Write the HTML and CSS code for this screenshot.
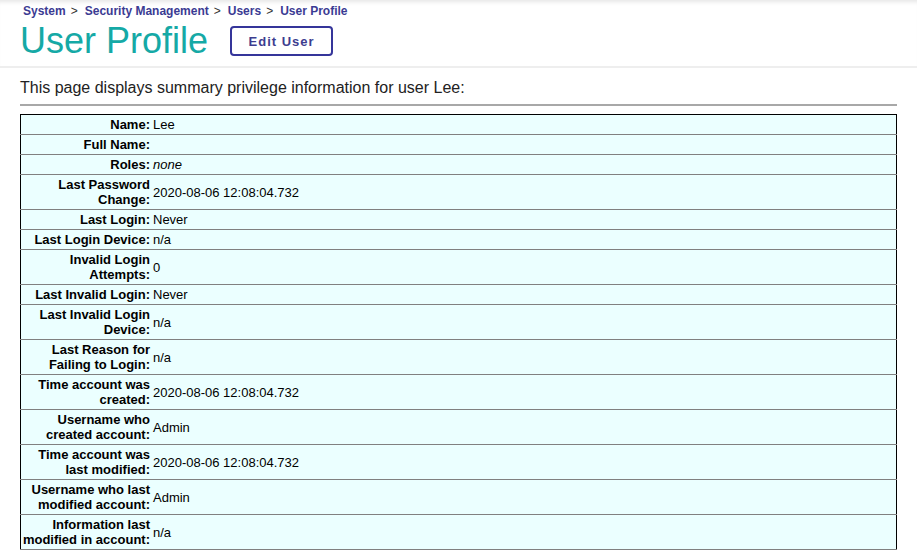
FILE: index.html
```html
<!DOCTYPE html>
<html lang="en">
<head>
<meta charset="utf-8">
<title>User Profile</title>
<link rel="stylesheet" href="styles.css">
</head>
<body>
<header class="page-header">
  <nav class="breadcrumb">
    <a href="#">System</a><span class="sep">&gt;</span><a href="#">Security Management</a><span class="sep">&gt;</span><a href="#">Users</a><span class="sep">&gt;</span><a href="#">User Profile</a>
  </nav>
  <div class="title-row">
    <h1 class="title">User Profile</h1>
    <button class="btn-edit" type="button">Edit User</button>
  </div>
</header>
<main class="content">
  <p class="intro">This page displays summary privilege information for user Lee:</p>
  <hr class="divider">
  <table class="profile">
    <tbody>
      <tr><td class="label">Name:</td><td class="value">Lee</td></tr>
      <tr><td class="label">Full Name:</td><td class="value"></td></tr>
      <tr><td class="label">Roles:</td><td class="value"><em>none</em></td></tr>
      <tr><td class="label">Last Password Change:</td><td class="value">2020-08-06 12:08:04.732</td></tr>
      <tr><td class="label">Last Login:</td><td class="value">Never</td></tr>
      <tr><td class="label">Last Login Device:</td><td class="value">n/a</td></tr>
      <tr><td class="label">Invalid Login Attempts:</td><td class="value">0</td></tr>
      <tr><td class="label">Last Invalid Login:</td><td class="value">Never</td></tr>
      <tr><td class="label">Last Invalid Login Device:</td><td class="value">n/a</td></tr>
      <tr><td class="label">Last Reason for Failing to Login:</td><td class="value">n/a</td></tr>
      <tr><td class="label">Time account was created:</td><td class="value">2020-08-06 12:08:04.732</td></tr>
      <tr><td class="label">Username who created account:</td><td class="value">Admin</td></tr>
      <tr><td class="label">Time account was last modified:</td><td class="value">2020-08-06 12:08:04.732</td></tr>
      <tr><td class="label">Username who last modified account:</td><td class="value">Admin</td></tr>
      <tr><td class="label">Information last modified in account:</td><td class="value">n/a</td></tr>
    </tbody>
  </table>
</main>
</body>
</html>
```
FILE: styles.css
```css
html, body {
  margin: 0;
  padding: 0;
  background: #ffffff;
}

body {
  font-family: "Liberation Sans", Arial, sans-serif;
  color: #000;
}

.page-header {
  padding: 4px 20px 5px 20px;
  border-bottom: 2px solid #eeeeee;
  box-shadow: inset 0 5px 4px -3px rgba(0, 0, 0, 0.10);
}

.breadcrumb {
  padding-left: 3px;
  font-size: 12px;
  line-height: 14px;
  font-weight: bold;
}

.breadcrumb a {
  color: #3b3b93;
  text-decoration: none;
}

.breadcrumb .sep {
  font-weight: normal;
  color: #333;
  margin: 0 7px 0 5px;
}

.title-row {
  display: flex;
  align-items: center;
  margin-top: 3px;
}

.title {
  margin: 0;
  font-size: 36px;
  line-height: 40px;
  font-weight: normal;
  color: #15a9a6;
}

.btn-edit {
  margin-left: 22px;
  width: 103px;
  height: 30px;
  padding: 0;
  background: #fff;
  border: 2px solid #35359a;
  border-radius: 4px;
  font-family: "Liberation Sans", Arial, sans-serif;
  font-size: 13px;
  font-weight: bold;
  letter-spacing: 1px;
  color: #3d3d8f;
}

.content {
  padding: 0 20px;
}

.intro {
  margin: 11px 0 0 0;
  font-size: 16px;
  line-height: 18px;
  color: #222;
}

.divider {
  margin: 7px 0 8px 0;
  border: 0;
  border-top: 2px solid #a8a8a8;
  height: 0;
}

.profile {
  width: 100%;
  border-collapse: collapse;
  background: #ebffff;
  border-top: 1px solid #000;
  border-left: 1px solid #000;
  border-right: 1px solid #000;
  font-size: 13px;
  line-height: 15px;
}

.profile tr {
  border-bottom: 1px solid #808080;
}

.profile td {
  vertical-align: middle;
}

.profile .label {
  width: 128px;
  padding: 2px 2px 2px 1px;
  text-align: right;
  font-weight: bold;
}

.profile .value {
  padding: 2px 2px 2px 1px;
  text-align: left;
}

.profile em {
  font-style: italic;
}
```
